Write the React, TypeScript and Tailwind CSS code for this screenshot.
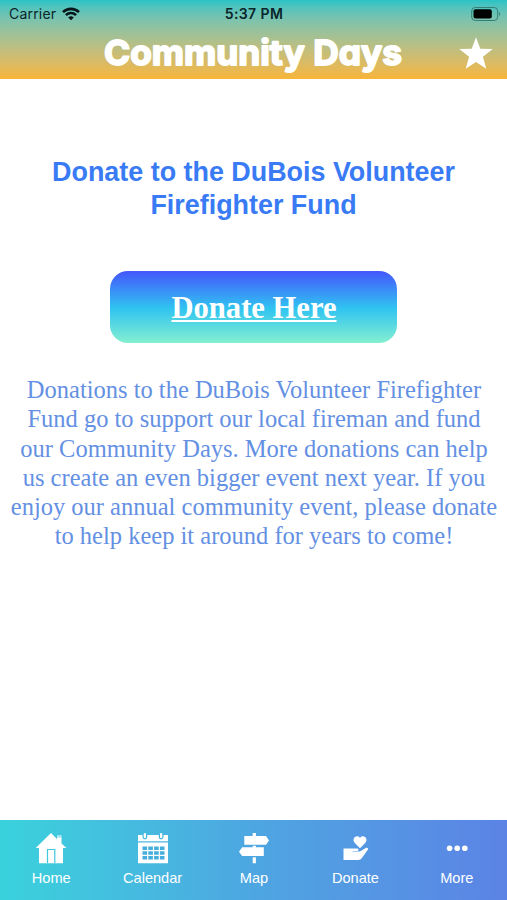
import type { ReactNode } from "react"

interface TabProps {
  label: string
  children: ReactNode
}

const lines = [
  "Donations to the DuBois Volunteer Firefighter",
  "Fund go to support our local fireman and fund",
  "our Community Days. More donations can help",
  "us create an even bigger event next year. If you",
  "enjoy our annual community event, please donate",
  "to help keep it around for years to come!",
]

function StatusBar() {
  return (
    <div className="grid h-7 grid-cols-3 items-center pl-[9px] pr-[6px] text-[14px] leading-none text-[#09252a]">
      <div className="flex items-center gap-[6px]">
        <span className="tracking-[0.2px]">Carrier</span>
        <svg width="18" height="14" viewBox="0 0 18 14" fill="none" stroke="#071719" strokeWidth="2.6">
          <path d="M1 5.1a11.5 11.5 0 0 1 16 0" />
          <path d="M3.9 8.1a7.4 7.4 0 0 1 10.2 0" />
          <path d="M9 13.3 6.2 10.5a4 4 0 0 1 5.6 0z" fill="#071719" stroke="none" />
        </svg>
      </div>
      <span className="-ml-[2px] whitespace-nowrap text-center font-semibold tracking-[0.4px]">5:37 PM</span>
      <svg className="justify-self-end" width="30" height="15" viewBox="0 0 30 15">
        <rect x="0.7" y="0.5" width="26" height="13" rx="3.5" fill="none" stroke="#357f78" strokeWidth="1" />
        <rect x="2.5" y="2.3" width="18.3" height="9.3" rx="2" fill="#000" />
        <path d="M28 4.8q2 2.2 0 4.4z" fill="#357f78" />
      </svg>
    </div>
  )
}

function Tab({ label, children }: TabProps) {
  return (
    <button className="flex flex-1 flex-col items-center pl-px pt-[12px] text-white">
      <svg width="32" height="32" viewBox="0 0 32 32" fill="currentColor">{children}</svg>
      <span className="mt-[5px] text-[14.6px] leading-[18px]">{label}</span>
    </button>
  )
}

export default function App() {
  return (
    <div className="flex h-[900px] w-[507px] flex-col overflow-hidden bg-white font-['Liberation_Sans',sans-serif]">
      <header className="h-[79px] shrink-0 bg-linear-to-b from-[#27c3c7] to-[#f7b536] font-['Inter',sans-serif]">
        <StatusBar />
        <div className="flex h-[51px] items-center justify-end pl-[100px] pr-[14px]">
          <svg width="306" height="51" viewBox="0 0 306 51" className="mr-[53px] shrink-0">
            <text
              x="4"
              y="37.3"
              textLength="298"
              lengthAdjust="spacingAndGlyphs"
              className="fill-white stroke-white font-bold [font-feature-settings:'cv11','ss03']"
              fontSize="34.5"
              strokeWidth="1.8"
              strokeLinejoin="round"
            >
              Community Days
            </text>
          </svg>
          <svg width="34" height="33" viewBox="0 0 34 33" className="shrink-0" fill="white">
            <path d="m17 0.2 4.3 11.5 12.4.4-9.8 7.7 3.4 12L17 25.1 6.7 31.8l3.4-12L.3 12.1l12.4-.4z" />
          </svg>
        </div>
      </header>

      <main className="flex flex-1 flex-col items-center text-center">
        <h1 className="mt-[77px] whitespace-nowrap text-[26.9px] font-bold leading-[33px] text-[#397af5]">
          Donate to the DuBois Volunteer
          <br />
          Firefighter Fund
        </h1>
        <a
          href="#donate"
          className="mt-[49px] flex h-[72px] w-[287px] items-center justify-center rounded-[18px] bg-[linear-gradient(#4456fb,#30c4f1_52%,#84efd0)] pl-px pt-[4px] font-['Liberation_Serif',serif] text-[30.6px] font-bold text-white underline decoration-2 underline-offset-[2px]"
        >
          Donate Here
        </a>
        <p className="mt-[32px] whitespace-nowrap pl-px font-['Liberation_Serif',serif] text-[24.5px] leading-[29.3px] text-[#6490e3]">
          {lines.map((line) => (
            <span key={line} className="block">{line}</span>
          ))}
        </p>
      </main>

      <nav className="flex h-[80px] shrink-0 bg-linear-to-r from-[#39d2dc] via-[#4da6e1] to-[#5b83e5]">
        <Tab label="Home">
          <path d="m16 1 6 6V3.6h4.5v8L31.5 16H28v15.3H4V16H.7z" />
          <path d="M22 4.9h4.5" stroke="#47c8df" strokeWidth="0.8" />
          <path d="M12.5 31V17.5h7.3V31" fill="none" stroke="#40c8de" strokeWidth="1.2" />
        </Tab>
        <Tab label="Calendar">
          <path d="M1 3h4.5v2a2.4 2.4 0 0 0 4.8 0V3h11.4v2a2.4 2.4 0 0 0 4.8 0V3H31v6.2H1zM1 10.6h30v20.6H1z" />
          <rect x="6.7" y="1" width="2.3" height="5.2" rx="1.1" />
          <rect x="23" y="1" width="2.3" height="5.2" rx="1.1" />
          <path
            d="M5.5 16.2h22M5.5 21h22M5.5 25.8h22"
            stroke="#45aedc"
            strokeWidth="3.4"
            strokeDasharray="4.6 1.2"
          />
        </Tab>
        <Tab label="Map">
          <path d="M14.7 1h3.2v3H28l3 4.4-3 4.4H6.3V4h8.4zM14.7 13.8h3.2v1.5h7.9v8.8H4.2L1 19.7l3.2-4.4h10.5zM14.7 25.2h3.2v6h-3.2z" />
        </Tab>
        <Tab label="Donate">
          <g transform="translate(-1.8 -0.8)">
            <path d="M17.4 6.1c1.8-1.8 4.4-1.5 5.4.7 1-2.2 3.6-2.5 5.4-.7 1.7 1.8 1.3 4-.2 5.6l-5.2 5.3-5.2-5.3c-1.5-1.6-1.9-3.8-.2-5.6z" />
            <path d="M6.3 17.2h13.5c2 0 2.1 2.4.2 2.5h-4.7v.5h6.8c1.2 0 2-.5 2.7-1.2l3.4-2c1.6-1.1 3.3.2 2.4 1.6l-6.1 8.4a4 4 0 0 1-3.3 1.8H6.3z" />
          </g>
        </Tab>
        <Tab label="More">
          <circle cx="8.6" cy="16.2" r="2.8" />
          <circle cx="16.2" cy="16.2" r="2.8" />
          <circle cx="23.8" cy="16.2" r="2.8" />
        </Tab>
      </nav>
    </div>
  )
}
